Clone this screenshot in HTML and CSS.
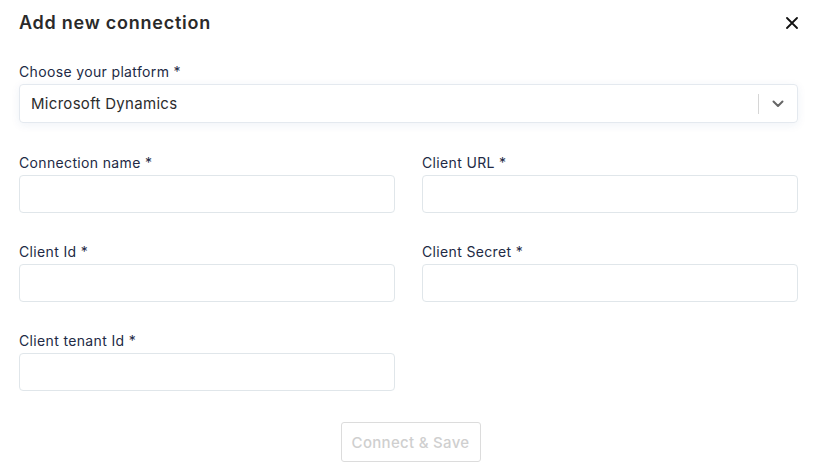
FILE: index.html
```html
<!DOCTYPE html>
<html>
<head>
<meta charset="utf-8">
<link rel="stylesheet" href="styles.css">
</head>
<body>
<div class="modal">
  <div class="header">
    <h1 class="title">Add new connection</h1>
    <button class="close" aria-label="Close">
      <svg width="12" height="12" viewBox="0 0 12 12"><path d="M1 1L11 11M11 1L1 11" stroke="#111" stroke-width="1.8" stroke-linecap="round"/></svg>
    </button>
  </div>
  <div class="field platform">
    <label class="label">Choose your platform *</label>
    <div class="select">
      <span class="select-value">Microsoft Dynamics</span>
      <span class="select-sep"></span>
      <span class="select-arrow">
        <svg width="12" height="8" viewBox="0 0 12 8"><path d="M1.5 1.5L6 6L10.5 1.5" fill="none" stroke="#666" stroke-width="2" stroke-linecap="round" stroke-linejoin="round"/></svg>
      </span>
    </div>
  </div>
  <div class="grid">
    <div class="field">
      <label class="label">Connection name *</label>
      <div class="input"></div>
    </div>
    <div class="field">
      <label class="label">Client URL *</label>
      <div class="input"></div>
    </div>
    <div class="field">
      <label class="label">Client Id *</label>
      <div class="input"></div>
    </div>
    <div class="field">
      <label class="label">Client Secret *</label>
      <div class="input"></div>
    </div>
    <div class="field">
      <label class="label">Client tenant Id *</label>
      <div class="input"></div>
    </div>
  </div>
  <div class="footer">
    <button class="btn" disabled>Connect &amp; Save</button>
  </div>
</div>
</body>
</html>
```
FILE: styles.css
```css
* { box-sizing: border-box; }
body {
  margin: 0;
  background: #fff;
  font-family: "Inter", "Open Sans", sans-serif;
}
.modal {
  padding: 10px 15px 0 19px;
}
.header {
  display: flex;
  justify-content: space-between;
  align-items: center;
  height: 26px;
}
.title {
  margin: 0;
  font-size: 18px;
  font-weight: 600;
  color: #2a2a2a;
  line-height: 26px;
  letter-spacing: 0.75px;
}
.close {
  border: 0;
  background: none;
  padding: 0;
  width: 12px;
  height: 12px;
  display: flex;
}
.field {
  display: flex;
  flex-direction: column;
}
.platform {
  margin-top: 26px;
}
.label {
  font-size: 14px;
  line-height: 20px;
  color: #222a45;
  margin-bottom: 2px;
  letter-spacing: 0.35px;
}
.select {
  height: 39px;
  border: 1px solid #e4e9ef;
  border-radius: 4px;
  box-shadow: 0 2px 10px rgba(30, 70, 140, 0.07);
  display: flex;
  align-items: center;
  padding-left: 11px;
}
.select-value {
  flex: 1;
  font-size: 15px;
  color: #2c2c2c;
  letter-spacing: 0.3px;
}
.select-sep {
  width: 1px;
  height: 20px;
  background: #d6d6d6;
}
.select-arrow {
  width: 38px;
  display: flex;
  justify-content: center;
  align-items: center;
}
.grid {
  margin-top: 30px;
  display: grid;
  grid-template-columns: 1fr 1fr;
  column-gap: 27px;
  row-gap: 29px;
}
.input {
  height: 38px;
  border: 1px solid #e0e6ea;
  border-radius: 4px;
}
.footer {
  display: flex;
  justify-content: center;
  margin-top: 31px;
  padding-left: 4px;
}
.btn {
  height: 40px;
  width: 140px;
  border: 1px solid #dcdcdc;
  border-radius: 3px;
  background: #fff;
  color: #cfcfcf;
  font-family: inherit;
  font-size: 15px;
  font-weight: 500;
  letter-spacing: 0.3px;
}
```
